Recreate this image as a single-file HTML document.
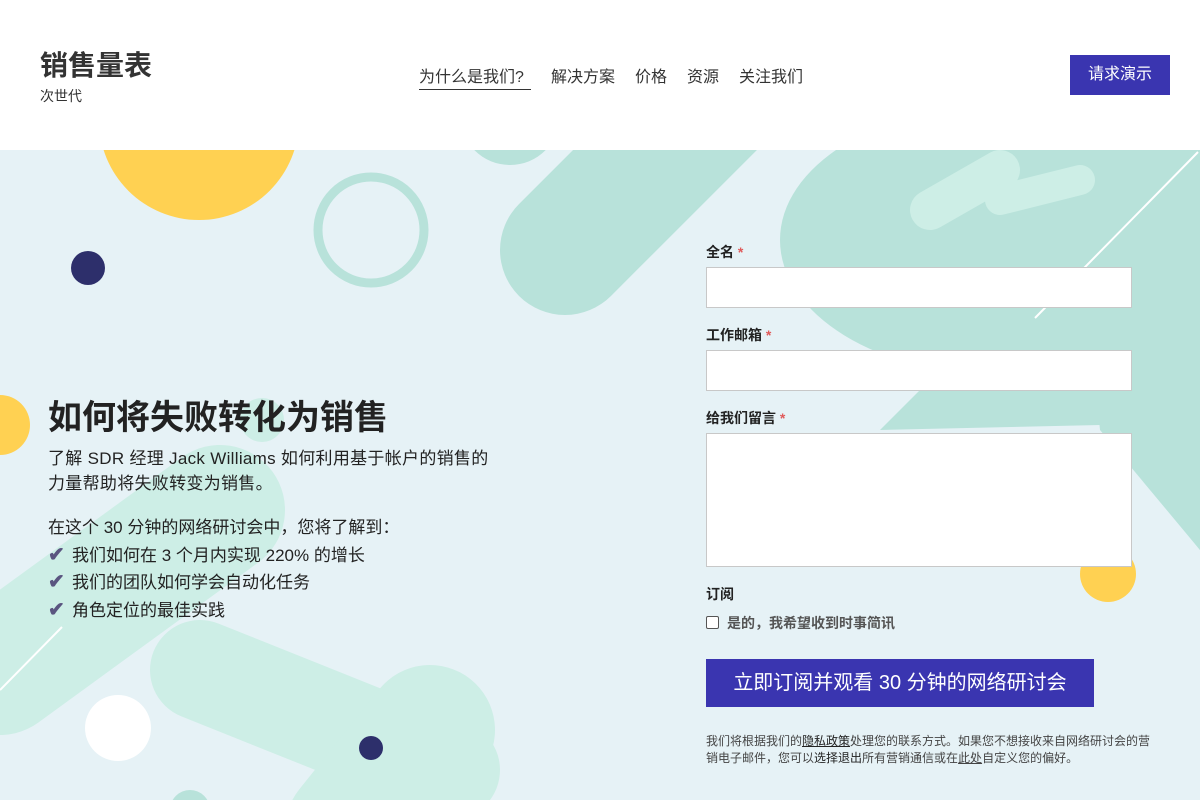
<!DOCTYPE html>
<html><head><meta charset="utf-8"><style>
*{margin:0;padding:0;box-sizing:border-box}
body{width:1200px;height:800px;overflow:hidden;background:#fff;font-family:"Liberation Sans","Noto Sans CJK SC",sans-serif;color:#222;position:relative}
.abs{position:absolute;white-space:nowrap}
#hero{position:absolute;left:0;top:150px;width:1200px;height:650px;background:#e6f2f6;overflow:hidden}
.lab{position:absolute;left:706px;font-size:14px;font-weight:bold;color:#222}
.lab span{color:#e05a5a}
.inp{position:absolute;left:706px;width:426px;background:#fff;border:1px solid #c8c8c8}
.ck{color:#5a5580;font-size:20px;font-weight:bold;display:inline-block;width:24px}
</style></head><body>
<div class="abs" style="left:40px;top:44px;font-size:28px;font-weight:bold;color:#333">销售量表</div>
<div class="abs" style="left:40px;top:86px;font-size:14px;color:#333">次世代</div>
<div class="abs" style="left:419px;top:63px;font-size:16px;color:#333;border-bottom:1px solid #333;padding-bottom:2px;width:112px">为什么是我们?</div>
<div class="abs" style="left:551px;top:63px;font-size:16px;color:#333">解决方案</div>
<div class="abs" style="left:635px;top:63px;font-size:16px;color:#333">价格</div>
<div class="abs" style="left:687px;top:63px;font-size:16px;color:#333">资源</div>
<div class="abs" style="left:739px;top:63px;font-size:16px;color:#333">关注我们</div>
<div class="abs" style="left:1070px;top:55px;width:100px;height:40px;background:#3a35b0;color:#fff;font-size:16px;text-align:center;line-height:40px">请求演示</div>

<div id="hero">
<svg width="1200" height="650" style="position:absolute;left:0;top:0">
<circle cx="510" cy="-35" r="50" fill="#b8e2da"/>
<g fill="#b8e2da">
<line x1="565" y1="100" x2="800" y2="-135" stroke="#b8e2da" stroke-width="130" stroke-linecap="round"/>
<ellipse cx="1000" cy="90" rx="220" ry="135"/>
<polygon points="880,280 1200,-40 1200,400 1100,275"/>
<polygon points="1000,40 1200,-100 1200,280 960,200"/>
<polygon points="1095,230 1200,130 1200,400 1100,280"/>
</g>
<line x1="930" y1="60" x2="1000" y2="20" stroke="#cdeee6" stroke-width="40" stroke-linecap="round"/>
<line x1="1000" y1="50" x2="1080" y2="30" stroke="#cdeee6" stroke-width="30" stroke-linecap="round"/>
<circle cx="371" cy="80" r="53" fill="none" stroke="#b8e2da" stroke-width="9"/>
<circle cx="199" cy="-30" r="100" fill="#ffd152"/>
<circle cx="88" cy="118" r="17" fill="#2d2f6b"/>
<circle cx="0" cy="275" r="30" fill="#ffd152"/>
<circle cx="262" cy="270" r="22" fill="#cdeee6"/>
<line x1="0" y1="520" x2="220" y2="360" stroke="#cdeee6" stroke-width="130" stroke-linecap="round"/>
<line x1="200" y1="520" x2="450" y2="620" stroke="#cdeee6" stroke-width="100" stroke-linecap="round"/>
<line x1="350" y1="680" x2="430" y2="580" stroke="#cdeee6" stroke-width="130" stroke-linecap="round"/>
<circle cx="190" cy="660" r="20" fill="#b8e2da"/>
<circle cx="118" cy="578" r="33" fill="#fff"/>
<circle cx="371" cy="598" r="12" fill="#2d2f6b"/>
<circle cx="1108" cy="424" r="28" fill="#ffd152"/>
<line x1="0" y1="540" x2="62" y2="477" stroke="#fff" stroke-width="2"/>
<line x1="1035" y1="168" x2="1198" y2="2" stroke="#fff" stroke-width="2"/>
</svg>
</div>

<div class="abs" style="left:48px;top:390px;font-size:34px;font-weight:bold;color:#222">如何将失败转化为销售</div>
<div class="abs" style="left:48px;top:446px;font-size:17px;line-height:25px;color:#222;letter-spacing:0.3px">了解 SDR 经理 Jack Williams 如何利用基于帐户的销售的<br>力量帮助将失败转变为销售。</div>
<div class="abs" style="left:48px;top:515px;font-size:17px;line-height:26.5px;color:#222">在这个 30 分钟的网络研讨会中，您将了解到：<br><span class="ck">✔</span>我们如何在 3 个月内实现 220% 的增长<br><span class="ck">✔</span>我们的团队如何学会自动化任务<br><span class="ck">✔</span>角色定位的最佳实践</div>

<div class="lab" style="top:242px">全名 <span>*</span></div>
<div class="inp" style="top:267px;height:41px"></div>
<div class="lab" style="top:325px">工作邮箱 <span>*</span></div>
<div class="inp" style="top:350px;height:41px"></div>
<div class="lab" style="top:408px">给我们留言 <span>*</span></div>
<div class="inp" style="top:433px;height:134px"></div>
<div class="lab" style="top:584px">订阅</div>
<div class="abs" style="left:706px;top:616px;width:13px;height:13px;border:1px solid #555;border-radius:2px;background:#fff"></div>
<div class="abs" style="left:727px;top:613px;font-size:14px;font-weight:bold;color:#555">是的，我希望收到时事简讯</div>
<div class="abs" style="left:706px;top:659px;width:388px;height:48px;background:#3a35b0;color:#fff;font-size:20px;text-align:center;line-height:48px">立即订阅并观看 30 分钟的网络研讨会</div>
<div class="abs" style="left:706px;top:733px;font-size:12px;line-height:17px;color:#444">我们将根据我们的<u style="color:#222">隐私政策</u>处理您的联系方式。如果您不想接收来自网络研讨会的营<br>销电子邮件，您可以<span style="color:#222">选择退出</span>所有营销通信或在<u>此处</u>自定义您的偏好。</div>
</body></html>
